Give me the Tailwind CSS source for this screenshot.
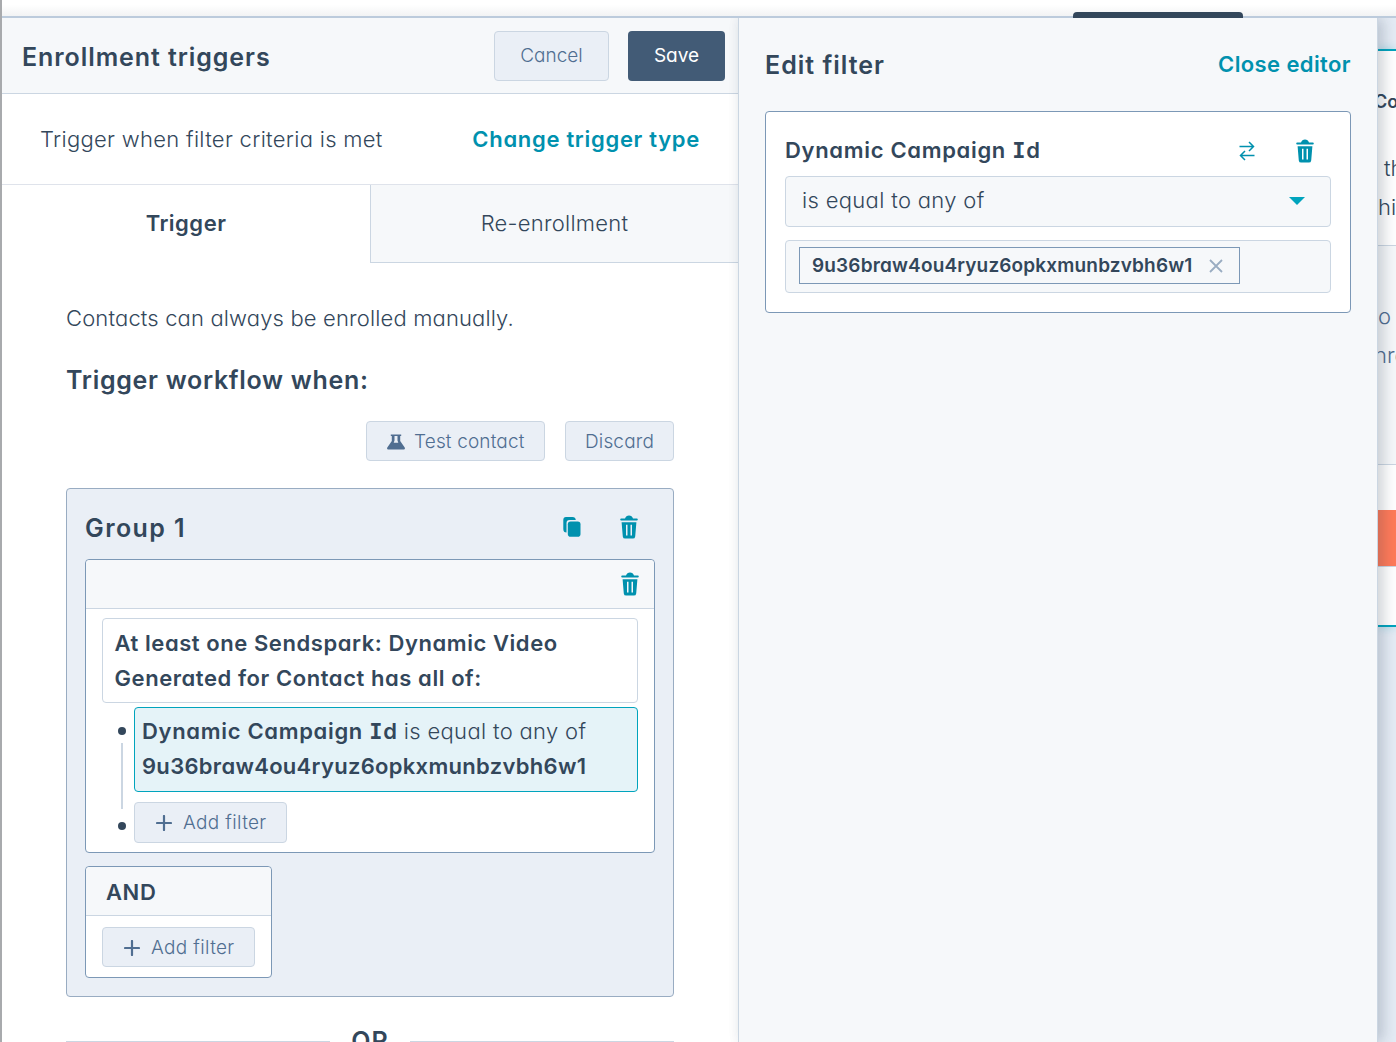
<!DOCTYPE html>
<html lang="en"><head><meta charset="utf-8"><title>Enrollment triggers</title>
<script src="https://cdn.jsdelivr.net/npm/@tailwindcss/browser@4"></script></head>
<body class="bg-white">
<svg class="hidden">
<symbol id="trash" viewBox="0 0 18 24"><path d="M1.2 3.6H5Q6 .4 9 .4T13 3.6h3.8q1 0 1 1t-1 1H1.200q-1 0-1-1t1-1z"/><path fill-rule="evenodd" d="M1.600 7.200h14.800l-1.200 14.200q-.2 2.200-2.400 2.200H5.200q-2.200 0-2.400-2.200zM6 9.800v10.800h1.500V9.800zm4.500 0v10.800H12V9.800z"/></symbol>
<symbol id="plus" viewBox="0 0 16 16"><path d="M8 1v14M1 8h14" fill="none" stroke="currentColor" stroke-width="2.2" stroke-linecap="round"/></symbol>
</svg>
<div class="relative flex h-[1042px] w-[1396px] flex-col overflow-hidden border-l-2 border-[#a8aaad] bg-white font-['Inter',sans-serif] text-[22px] font-light text-[#33475b] [font-feature-settings:'cv11']">
  <div class="h-[18px] shrink-0 border-b-2 border-[#bccbdc] bg-linear-to-b from-white from-30% to-[#f2f3f4]"></div>
  <div class="absolute top-3 left-[1071px] h-1.5 w-[170px] rounded-t bg-[#33475b]"></div>
  <main class="flex min-h-0 flex-1 overflow-hidden">
    <section class="flex w-[736px] shrink-0 flex-col bg-white">
      <header class="flex h-[76px] shrink-0 items-center border-b border-[#cbd6e2] bg-[#f6f8fa] pr-[13px] pl-5">
        <h1 class="flex-1 pt-1 text-[25px] font-semibold tracking-[0.92px]">Enrollment triggers</h1>
        <button class="mr-[19px] h-[50px] w-[115px] rounded border border-[#cbd6e2] bg-[#eaeff6] pt-0.5 text-[19px] text-[#506e91]">Cancel</button>
        <button class="h-[50px] w-[97px] rounded bg-[#425b76] pt-0.5 text-[19px] font-normal text-white">Save</button>
      </header>
      <div class="flex h-[91px] shrink-0 items-center justify-between border-b border-[#dfe3eb] pt-px pr-[38px] pl-[38px]">
        <span class="tracking-[0.3px]">Trigger when filter criteria is met</span>
        <a class="font-semibold tracking-[0.7px] text-[#0091ae]">Change trigger type</a>
      </div>
      <nav class="flex h-[78px] shrink-0 text-center leading-[77px]">
        <div class="w-[368px] font-semibold tracking-[0.5px]">Trigger</div>
        <div class="flex-1 border-b border-l border-[#cbd6e2] bg-[#f6f8fa] tracking-[0.25px]">Re-enrollment</div>
      </nav>
      <div class="px-16 pt-[39px]">
        <p class="leading-8 tracking-[0.15px]">Contacts can always be enrolled manually.</p>
        <h2 class="mt-7.5 text-[25px] leading-8 font-semibold tracking-[0.7px]">Trigger workflow when:</h2>
        <div class="mt-[25px] flex justify-end gap-5 text-[19px] tracking-[0.15px] text-[#506e91]">
          <button class="flex h-10 w-[179px] items-center rounded border border-[#cbd6e2] bg-[#eaeff6] pl-5">
            <svg class="mt-px mr-[9px] h-4 w-[18px]" viewBox="0 0 18 16" fill="currentColor"><path fill-rule="evenodd" d="M3.800 0.500h10.400v1.600h-1V7l4.500 6.500q.8 1.900-1 1.900H1.300q-1.800 0-1-1.900L4.800 7V2.100h-1zM7.500 2.100V6.500L6.700 8.700h4.600L10.500 6.500V2.100z"/></svg>
            <span class="pt-0.5">Test contact</span></button>
          <button class="h-10 w-[109px] rounded border border-[#cbd6e2] bg-[#eaeff6] pt-0.5">Discard</button>
        </div>
        <div class="mt-[27px] h-[509px] rounded border border-[#99acc2] bg-[#eaeff6] px-[18px]">
          <div class="flex h-[70px] items-center pt-1.5 pr-[17px]">
            <h3 class="flex-1 pt-[3px] text-[25px] font-semibold tracking-[1.4px]">Group 1</h3>
            <svg class="mr-[39px] h-5 w-[18px] text-[#0091ae]" viewBox="0 0 18 20" fill="currentColor"><path d="M3 0h6.500Q12.500 0 12.800 2.900H6.500Q3.500 2.900 3.500 6v9.500Q.3 15.500.3 12V3Q.3 0 3 0z"/><rect x="4.800" y="4.500" width="12.700" height="15.200" rx="2.800"/></svg>
            <svg class="h-6 w-[18px] fill-[#0091ae]"><use href="#trash"/></svg>
          </div>
          <div class="h-[294px] rounded border border-[#7c98b6] bg-white">
            <div class="flex h-[49px] items-center justify-end rounded-t border-b border-[#cbd6e2] bg-[#f6f8fa] pr-[15px]"><svg class="h-6 w-[18px] fill-[#0091ae]"><use href="#trash"/></svg></div>
            <div class="px-4 pt-[9px] leading-[35px]">
              <div class="h-[85px] rounded border border-[#cbd6e2] pt-[7px] pl-[11.5px] font-semibold tracking-[0.57px] whitespace-nowrap">At least one Sendspark: Dynamic Video<br>Generated for Contact has all of:</div>
              <div class="mt-1 flex">
                <div class="flex w-8 flex-col items-center pt-5 pl-2"><i class="size-2 rounded-full bg-[#33475b]"></i><i class="mt-2 h-[66px] w-0.5 bg-[#cbd6e2]"></i><i class="mt-[13px] size-2 rounded-full bg-[#33475b]"></i></div>
                <div class="flex-1">
                  <div class="h-[85px] rounded border border-[#00a4bd] bg-[#e5f3f8] px-[7px] pt-1.5 whitespace-nowrap"><span class="font-semibold tracking-[0.68px]">Dynamic Campaign <span class="font-['DejaVu_Sans_Mono'] leading-none">I</span>d</span> <span class="tracking-[0.33px]">is equal to any of</span><br><span class="font-semibold tracking-[0.3px]">9u36braw4ou4ryuz6opkxmunbzvbh6w1</span></div>
                  <button class="mt-2.5 flex h-[41px] w-[153px] items-center rounded border border-[#cbd6e2] bg-[#eaeff6] pl-[21px] text-[19px] tracking-[0.35px] text-[#506e91]"><svg class="mr-[11px] size-4"><use href="#plus"/></svg>Add filter</button>
                </div>
              </div>
            </div>
          </div>
          <div class="mt-[13px] h-28 w-[187px] rounded border border-[#7c98b6] bg-white">
            <div class="h-[49px] rounded-t border-b border-[#cbd6e2] bg-[#f6f8fa] pl-5 leading-[50px] font-semibold tracking-[0.6px]">AND</div>
            <button class="mt-[11px] ml-4 flex h-10 w-[153px] items-center rounded border border-[#cbd6e2] bg-[#eaeff6] pl-[21px] text-[19px] tracking-[0.35px] text-[#506e91]"><svg class="mt-px mr-[11px] size-4"><use href="#plus"/></svg><span class="pt-0.5">Add filter</span></button>
          </div>
        </div>
        <div class="mt-7 flex h-8 items-center text-[25px] font-semibold tracking-[1px]"><i class="h-px flex-1 bg-[#cbd6e2]"></i><span class="w-20 pt-0.5 text-center">OR</span><i class="h-px flex-1 bg-[#cbd6e2]"></i></div>
      </div>
    </section>
    <section class="z-10 w-[640px] shrink-0 border-x border-[#cbd6e2] bg-[#f6f8fa] px-[26px] shadow-[6px_0_14px_rgba(45,62,80,0.2),0_0_12px_rgba(45,62,80,0.05)]">
      <div class="flex h-[93px] items-center justify-between">
        <h2 class="pt-0.5 text-[25px] font-semibold tracking-[1px]">Edit filter</h2>
        <a class="font-semibold tracking-[0.4px] text-[#0091ae]">Close editor</a>
      </div>
      <div class="h-[202px] rounded border border-[#7c98b6] bg-white px-[19px] pt-[15px]">
        <div class="flex h-[49px] items-center pr-[17px] pb-0.5">
          <h3 class="flex-1 pb-0.5 leading-8 font-semibold tracking-[0.68px]">Dynamic Campaign <span class="font-['DejaVu_Sans_Mono'] leading-none">I</span>d</h3>
          <svg class="mr-[41px] h-5 w-4" viewBox="0 0 16 20" fill="none" stroke="#0091ae" stroke-width="1.500"><path d="M.5 5.500h14M10 1l4.500 4.500L10 10M15.500 14.500h-14M6 10l-4.500 4.500L6 19"/></svg>
          <svg class="h-6 w-[18px] fill-[#0091ae]"><use href="#trash"/></svg>
        </div>
        <div class="flex h-[51px] items-center justify-between rounded border border-[#cbd6e2] bg-[#f6f8fa] pr-[25px] pb-0.5 pl-4"><span class="tracking-[0.33px]">is equal to any of</span><svg class="h-2 w-4" viewBox="0 0 16 8"><path d="M0 0h16L8 8z" fill="#00a4bd"/></svg></div>
        <div class="mt-[13px] h-[53px] rounded border border-[#cbd6e2] bg-[#f6f8fa] px-[13px] pt-1.5">
          <div class="flex h-[37px] w-[441px] items-center justify-between border border-[#7c98b6] pr-4 pl-3 text-[19px] font-semibold tracking-[0.16px]"><span class="pt-0.5">9u36braw4ou4ryuz6opkxmunbzvbh6w1</span><svg class="size-3.5" viewBox="0 0 14 14" stroke="#99acc2" stroke-width="1.800"><path d="M1 1l12 12M13 1L1 13"/></svg></div>
        </div>
      </div>
    </section>
    <aside class="flex w-[18px] shrink-0 flex-col overflow-hidden bg-[#e5ecf5] whitespace-nowrap">
      <div class="mt-[31px] h-[578px] border-y-2 border-[#00a4bd] bg-white shadow-[0_0_10px_rgba(0,164,189,0.3)]">
        <div class="h-[195px] border-b border-[#cbd6e2] pt-8"><div class="-ml-1 text-lg leading-[38px] font-semibold">Co</div><div class="mt-7 pl-1.5 leading-[39px]">th</div><div class="leading-[39px]">hi</div></div>
        <div class="h-[219px] border-b border-[#cbd6e2] bg-[#f6f8fa] pt-[51px] leading-[39px] text-[#506e91]"><div>o</div><div class="-ml-1">nro</div></div>
        <div class="mt-[45px] h-[57px] border-b border-[#cbd6e2] bg-[#ff7a59]"></div>
      </div>
    </aside>
  </main>
</div>
</body></html>
